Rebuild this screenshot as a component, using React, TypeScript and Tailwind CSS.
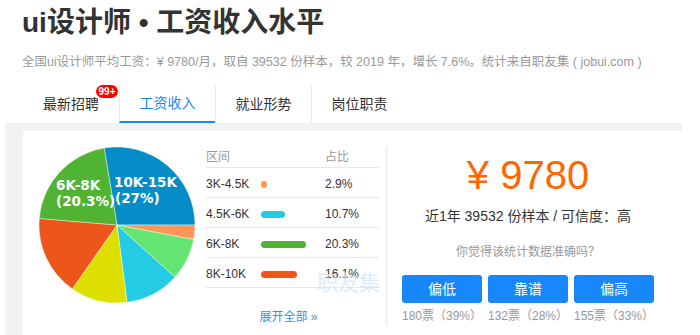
import React from "react";

const slices = [
  { from: -9.5, to: 90, color: "#058DC7" },
  { from: 90, to: 100.7, color: "#FF9655" },
  { from: 100.7, to: 132, color: "#64E572" },
  { from: 132, to: 172.6, color: "#24CBE5" },
  { from: 172.6, to: 215, color: "#DDDF00" },
  { from: 215, to: 274.8, color: "#ED561B" },
  { from: 274.8, to: 350.5, color: "#50B432" },
];

function pt(cx: number, cy: number, r: number, a: number) {
  const rad = (a * Math.PI) / 180;
  return [cx + r * Math.sin(rad), cy - r * Math.cos(rad)];
}

function Pie() {
  const cx = 80, cy = 80, r = 78;
  return (
    <svg width="160" height="160" viewBox="0 0 160 160" className="shrink-0">
      {slices.map((s, i) => {
        const [x1, y1] = pt(cx, cy, r, s.from);
        const [x2, y2] = pt(cx, cy, r, s.to);
        const large = s.to - s.from > 180 ? 1 : 0;
        return (
          <path
            key={i}
            d={`M${cx},${cy} L${x1},${y1} A${r},${r} 0 ${large} 1 ${x2},${y2} Z`}
            fill={s.color}
            stroke="#ffffff"
            strokeWidth="0.4"
          />
        );
      })}
      <g fill="#ffffff" fontFamily="'DejaVu Sans', sans-serif" fontWeight="bold" fontSize="13.5">
        <text x="77" y="42">10K-15K</text>
        <text x="78" y="58">(27%)</text>
        <text x="19" y="45">6K-8K</text>
        <text x="19" y="61">(20.3%)</text>
      </g>
    </svg>
  );
}

const rows = [
  { label: "3K-4.5K", pct: 2.9, color: "#FF9655" },
  { label: "4.5K-6K", pct: 10.7, color: "#24CBE5" },
  { label: "6K-8K", pct: 20.3, color: "#50B432" },
  { label: "8K-10K", pct: 16.1, color: "#ED561B" },
];

const votes = [
  { label: "偏低", count: "180票（39%）" },
  { label: "靠谱", count: "132票（28%）" },
  { label: "偏高", count: "155票（33%）" },
];

export default function App() {
  return (
    <div
      className="w-[700px] h-[335px] overflow-hidden bg-white text-[#333]"
      style={{ fontFamily: "'Liberation Sans', 'Noto Sans CJK SC', sans-serif" }}
    >
      <div className="pl-[22px] pt-[8px] text-[28px] font-bold leading-[30px] text-[#333]">
        ui设计师 • 工资收入水平
      </div>
      <div className="pl-[22px] mt-[15px] text-[12.5px] leading-[18px] text-[#999] whitespace-nowrap">
        全国ui设计师平均工资：¥ 9780/月，取自 39532 份样本，较 2019 年，增长 7.6%。统计来自职友集 ( jobui.com )
      </div>
      <div className="ml-[23px] mt-[14px] flex h-[38px]">
        <div className="relative w-[96px] flex items-center justify-center text-[14px] text-[#333]">
          最新招聘
          <span className="absolute left-[73px] top-0 h-[13px] w-[22px] rounded-full bg-[#f00] text-white text-[10px] font-bold leading-[13px] text-center">
            99+
          </span>
        </div>
        <div className="w-[96px] flex items-center justify-center text-[14px] text-[#1787fb] border-l border-[#e8e8e8] border-b-2 border-b-[#1787fb]">
          工资收入
        </div>
        <div className="w-[96px] flex items-center justify-center text-[14px] text-[#333] border-l border-[#e8e8e8]">
          就业形势
        </div>
        <div className="w-[96px] flex items-center justify-center text-[14px] text-[#333] border-l border-[#e8e8e8]">
          岗位职责
        </div>
      </div>
      <div className="ml-[5px] w-[677px] h-[220px] bg-[#f2f2f2] pt-[8px] pl-[18px]">
        <div className="h-full bg-white flex">
          <div className="relative w-[362px] flex">
            <div className="ml-[14px] mt-[14px]">
              <Pie />
            </div>
            <div className="ml-[9px] mt-[15px] w-[173px]">
              <div className="h-[22px] flex items-center border-b border-[#e8e8e8] text-[12px] text-[#999]">
                <div className="w-[119px]">区间</div>
                <div>占比</div>
              </div>
              {rows.map((r) => (
                <div key={r.label} className="h-[30px] pt-[3px] flex items-center border-b border-[#e8e8e8] text-[12px] text-[#333]">
                  <div className="w-[55px]">{r.label}</div>
                  <div className="w-[64px] flex items-center">
                    <div
                      className="h-[7px] rounded-full"
                      style={{ width: `${r.pct * 2.22}px`, backgroundColor: r.color }}
                    />
                  </div>
                  <div>{r.pct}%</div>
                </div>
              ))}
              <div className="mt-[21px] text-center text-[12px] leading-[16px] text-[#3a8ee6] pr-[8px]">
                展开全部 »
              </div>
            </div>
            <div className="absolute left-[294px] top-[140px] text-[21px] leading-[24px] text-[#d6e6f8] opacity-80">
              职友集
            </div>
          </div>
          <div className="mt-[16px] w-[3px] h-[178px] bg-[#f2f2f2]" />
          <div className="w-[280px] flex flex-col items-center">
            <div className="pt-[24px] text-[40px] leading-[40px] text-[#ff6600]">¥ 9780</div>
            <div className="mt-[11px] text-[14px] leading-[20px] text-[#333]">
              近1年 39532 份样本 / 可信度：高
            </div>
            <div className="mt-[17px] text-[12px] leading-[18px] text-[#999]">你觉得该统计数据准确吗？</div>
            <div className="mt-[14px] flex gap-[6px]">
              {votes.map((v) => (
                <div key={v.label} className="w-[80px] flex flex-col items-center">
                  <div className="w-[80px] h-[28px] rounded-[3px] bg-[#1787fb] text-white text-[14px] flex items-center justify-center">
                    {v.label}
                  </div>
                  <div className="mt-[5px] text-[12px] leading-[16px] text-[#999] whitespace-nowrap">
                    {v.count}
                  </div>
                </div>
              ))}
            </div>
          </div>
        </div>
      </div>
    </div>
  );
}
